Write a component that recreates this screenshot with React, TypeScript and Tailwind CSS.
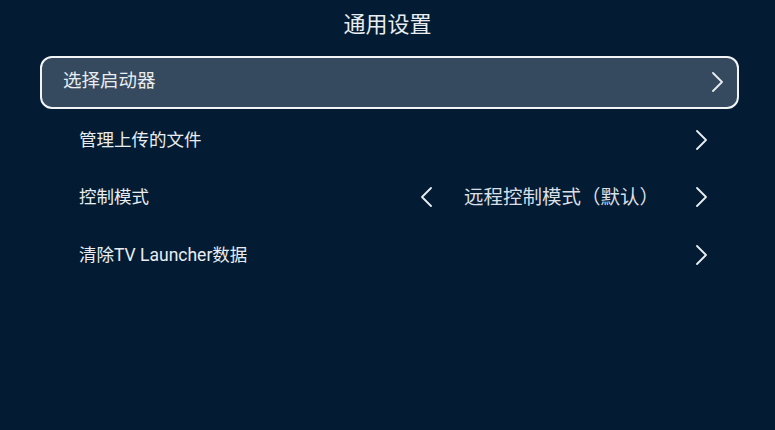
const FONT = { fontFamily: 'Roboto, "Noto Sans CJK SC", sans-serif' };

interface Row { label: string; value?: string; }

const ROWS: Row[] = [
  { label: "选择启动器" },
  { label: "管理上传的文件" },
  { label: "控制模式", value: "远程控制模式（默认）" },
  { label: "清除TV Launcher数据" },
];

function Arrow({ dir }: { dir: "left" | "right" }) {
  return (
    <svg width="11" height="20" viewBox="0 0 11 20" fill="none" stroke="#e9edf1" strokeWidth="1.8"
      strokeLinecap="round" strokeLinejoin="round" className="shrink-0">
      <path d={dir === "left" ? "M10 1 1 10l9 9" : "M1 1l9 9-9 9"} />
    </svg>
  );
}

export default function App() {
  const focused = 0;
  return (
    <div className="w-[775px] h-[430px] bg-[#031c33] text-[#e9edf1] overflow-hidden" style={FONT}>
      <h1 className="text-center text-[22px] leading-none pt-[14px] h-[57px]">通用设置</h1>
      <div className="flex flex-col gap-[7.7px] pl-[55px] pr-[51px]">
        {ROWS.map((r, i) =>
          i === focused ? (
            <div key={r.label}
              className="-mx-[15px] -my-[1.5px] h-[53px] flex items-center justify-between pl-[21px] pr-[14px] rounded-[12px] border-[2.5px] border-[#f2f4f6] bg-[#354a5e]">
              <span className="text-[18.5px]">{r.label}</span>
              <Arrow dir="right" />
            </div>
          ) : (
            <div key={r.label} className="h-[50px] flex items-center pl-[24px] pr-[17px]">
              <span className="text-[17.5px] flex-1">{r.label}</span>
              {r.value && (
                <div className="flex items-center">
                  <Arrow dir="left" />
                  <span className="text-[19.5px] ml-[32px] w-[232px] text-[#d9dfe5]">{r.value}</span>
                </div>
              )}
              <Arrow dir="right" />
            </div>
          )
        )}
      </div>
    </div>
  );
}
